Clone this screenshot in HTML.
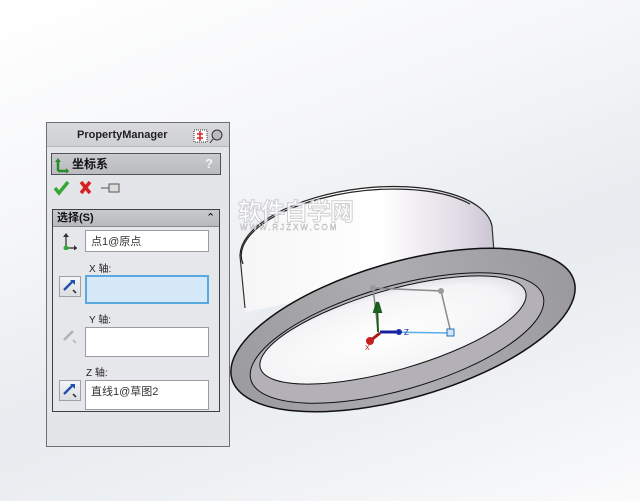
<!DOCTYPE html>
<html><head><meta charset="utf-8"><style>
*{margin:0;padding:0;box-sizing:border-box}
body{width:640px;height:501px;overflow:hidden;position:relative;font-family:"Liberation Sans","Noto Sans CJK SC",sans-serif;background:linear-gradient(160deg,#ffffff 0%,#f6f7f9 30%,#e8ebef 60%,#f2f4f6 85%,#fbfbfc 100%)}
.a{position:absolute}
.pm{left:46px;top:122px;width:184px;height:325px;background:#e4e5e8;border:1px solid #6d6f73}
.hdr{left:0;top:0;width:182px;height:24px;background:linear-gradient(#d9dadd,#cfd0d3);border-bottom:1px solid #b5b7ba;font-size:11px;font-weight:bold;color:#222;line-height:24px;padding-left:30px}
.ttl{left:4px;top:30px;width:170px;height:22px;background:linear-gradient(#c9cacd,#b9bbbe);border:1px solid #505257;font-size:12px;font-weight:bold;line-height:20px;padding-left:20px;color:#111}
.grp{left:5px;top:86px;width:168px;height:203px;border:1px solid #3f4146;background:#e6e7ea}
.gh{left:0;top:0;width:166px;height:17px;background:linear-gradient(#c8c9cc,#b9babd);border-bottom:1px solid #888;font-size:11px;font-weight:bold;line-height:17px;padding-left:4px;color:#111}
.box{background:#fff;border:1px solid #9a9ca0;font-size:11px;color:#333;padding:2px 5px}
.lbl{font-size:10px;color:#222}
.btn{width:22px;height:21px;border:1px solid #9da0a5;background:linear-gradient(#f4f5f7,#dcdde0)}
</style></head><body>
<svg class="a" style="left:0;top:0" width="640" height="501">
 <defs>
  <linearGradient id="cyl" x1="0" x2="1" y1="0" y2="0"><stop offset="0" stop-color="#f6f6f7"/><stop offset=".55" stop-color="#ffffff"/><stop offset=".85" stop-color="#e2dde6"/><stop offset="1" stop-color="#cbc5d2"/></linearGradient>
  <linearGradient id="fl" x1="0" x2="1" y1="0" y2="0"><stop offset="0" stop-color="#9c9ca0"/><stop offset=".5" stop-color="#aeaeb2"/><stop offset="1" stop-color="#9a9a9e"/></linearGradient>
  <radialGradient id="hole" cx=".45" cy=".55" r=".6"><stop offset="0" stop-color="#ffffff"/><stop offset=".8" stop-color="#f4f4f6"/><stop offset="1" stop-color="#dcdce2"/></radialGradient>
 </defs>
 <!-- cylinder -->
 <path d="M240 256 A127 55 -7 0 1 492 226 L495 262 L245 312 Z" fill="url(#cyl)"/>
 <path d="M240 256 A127 55 -7 0 1 492 226" fill="none" stroke="#222" stroke-width="1.2"/>
 <path d="M243 264 A125 52 -7 0 1 470 204" fill="none" stroke="#222" stroke-width="1.2"/>
 <line x1="240" y1="256" x2="245" y2="308" stroke="#333" stroke-width="1.2"/>
 <line x1="492" y1="226" x2="494" y2="252" stroke="#333" stroke-width="1.2"/>
 <!-- flange -->
 <ellipse cx="403" cy="330" rx="178" ry="68" transform="rotate(-16 403 330)" fill="url(#fl)" stroke="#111" stroke-width="1.5"/>
 <ellipse cx="397" cy="338" rx="152" ry="52" transform="rotate(-16 397 338)" fill="#b4b0b8" stroke="#111" stroke-width="1"/>
 <ellipse cx="393" cy="330" rx="138" ry="40" transform="rotate(-16 393 330)" fill="url(#hole)" stroke="#111" stroke-width="1"/>
 <!-- sketch -->
 <polyline points="373,288 441,291 451,333" fill="none" stroke="#8a8a8a" stroke-width="1.5"/>
 <line x1="373" y1="288" x2="378" y2="330" stroke="#8a8a8a" stroke-width="1.5"/>
 <line x1="382" y1="332" x2="451" y2="333" stroke="#5aaee8" stroke-width="1.5"/>
 <rect x="447" y="329" width="7" height="7" fill="#cfe6f8" stroke="#2a6fb5"/>
 <circle cx="373" cy="288" r="3" fill="#999"/><circle cx="441" cy="291" r="3" fill="#999"/>
 <path d="M378 332 L377 302 L374 312 L381 312 L378 302" fill="#2a7a2a" stroke="#1b5e1b" stroke-width="2"/>
 <path d="M380 332 L400 332" stroke="#1520a0" stroke-width="3"/><circle cx="399" cy="332" r="3" fill="#1a2aa8"/>
 <path d="M380 333 L370 341" stroke="#b01515" stroke-width="3"/><circle cx="370" cy="341" r="4" fill="#c42020"/>
 <text x="404" y="335" font-size="8" fill="#1a2aa8" font-family="Liberation Sans">Z</text>
 <text x="365" y="350" font-size="7" fill="#b01515" font-family="Liberation Sans">X</text>
 <text x="238" y="220" font-size="24" font-weight="bold" fill="#fff" stroke="#c8c8cc" stroke-width="1" font-family="Noto Sans CJK SC,sans-serif" opacity=".85" letter-spacing="-1">软件自学网</text>
 <text x="240" y="230" font-size="8" fill="#fff" stroke="#b0b0b6" stroke-width=".4" font-family="Liberation Sans" letter-spacing="2">WWW.RJZXW.COM</text>
</svg>
<div class="a pm">
 <div class="a hdr">PropertyManager</div>
 <svg class="a" style="left:146px;top:5px" width="34" height="16"><rect x="1" y="2" width="13" height="12" fill="#fff" stroke="#333" stroke-dasharray="1 1"/><path d="M7 3v10M4 6h6M4 10h6" stroke="#d22" stroke-width="1.5"/><circle cx="24" cy="7" r="5" fill="#bbb" stroke="#333"/><path d="M20 11l-3 4" stroke="#333"/></svg>
 <div class="a ttl">坐标系</div>
 <svg class="a" style="left:7px;top:34px" width="16" height="16"><path d="M4 14V3M4 14h10" stroke="#2a8a2a" stroke-width="2.5" fill="none"/><path d="M1 5l3-4 3 4M12 11l3 3-3 3" fill="#2a8a2a"/></svg>
 <div class="a" style="left:158px;top:33px;font-size:13px;font-weight:bold;color:#f4f4f4">?</div>
 <svg class="a" style="left:6px;top:56px" width="70" height="18"><path d="M2 9l4 5 9-11" stroke="#36a836" stroke-width="3.5" fill="none"/><path d="M28 3l9 11M37 3l-9 11" stroke="#d42020" stroke-width="3.5"/><path d="M48 9h8M56 5h10v8H56z" stroke="#555" fill="#ddd"/></svg>
 <div class="a grp">
  <div class="a gh">选择(S)</div>
  <div class="a" style="left:153px;top:1px;font-size:11px">&#8963;</div>
  <svg class="a" style="left:7px;top:22px" width="18" height="18"><path d="M6 16V3M6 16h11" stroke="#2a2a2a" stroke-width="1.2"/><circle cx="6" cy="16" r="2.5" fill="#3a3"/><path d="M3 5l3-4 3 4M14 13l3 3-3 3" fill="#333"/></svg>
  <div class="a box" style="left:32px;top:20px;width:124px;height:22px">点1@原点</div>
  <div class="a lbl" style="left:36px;top:50px">X 轴:</div>
  <div class="a btn" style="left:6px;top:66px"></div>
  <svg class="a" style="left:8px;top:68px" width="18" height="18"><path d="M3 12L12 3" stroke="#2050b0" stroke-width="2.5"/><path d="M9 2h5v5" fill="#2050b0"/><path d="M12 12l3 3" stroke="#222" stroke-width="1.5"/></svg>
  <div class="a box" style="left:32px;top:65px;width:124px;height:29px;background:#d5e9f8;border:2px solid #5aa8e0"></div>
  <div class="a lbl" style="left:36px;top:101px">Y 轴:</div>
  <svg class="a" style="left:8px;top:118px" width="18" height="18"><path d="M3 12L12 3" stroke="#b0b2b6" stroke-width="2.5"/><path d="M12 12l3 3" stroke="#b0b2b6" stroke-width="1.5"/></svg>
  <div class="a box" style="left:32px;top:117px;width:124px;height:30px"></div>
  <div class="a lbl" style="left:33px;top:154px">Z 轴:</div>
  <div class="a btn" style="left:6px;top:170px"></div>
  <svg class="a" style="left:8px;top:172px" width="18" height="18"><path d="M3 12L12 3" stroke="#2050b0" stroke-width="2.5"/><path d="M9 2h5v5" fill="#2050b0"/><path d="M12 12l3 3" stroke="#222" stroke-width="1.5"/></svg>
  <div class="a box" style="left:32px;top:170px;width:124px;height:30px">直线1@草图2</div>
 </div>
</div>
</body></html>
